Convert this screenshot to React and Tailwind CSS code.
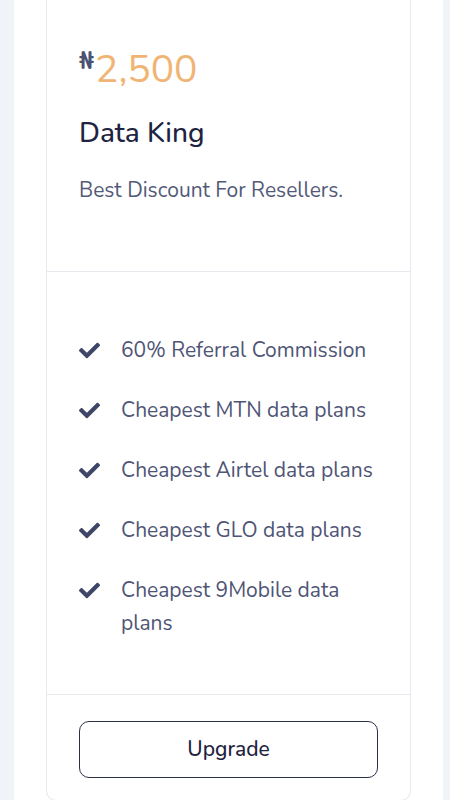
import React from "react";
import { FaCheck } from "react-icons/fa";

const features = [
  "60% Referral Commission",
  "Cheapest MTN data plans",
  "Cheapest Airtel data plans",
  "Cheapest GLO data plans",
  "Cheapest 9Mobile data plans",
];

export default function App() {
  return (
    <div
      className="min-h-screen bg-[#f0f4f8] pl-[14px] pr-[7px]"
      style={{ fontFamily: '"Nunito", "Lato", "Open Sans", sans-serif' }}
    >
      <div className="bg-white px-[32px] min-h-screen">
        <div className="border border-t-0 border-[#e7e9ee] rounded-b-[10px]">
          <div className="px-[32px] pt-[48px] pb-[66px]">
            <div className="flex items-start h-[44px]">
              <span className="text-[25px] font-bold text-[#4b5170] leading-none mt-[1px] mr-[1px]">₦</span>
              <span className="text-[39px] leading-[44px] text-[#f0b574]">2,500</span>
            </div>
            <h2 className="mt-[24px] text-[28px] leading-[34px] font-medium text-[#1e2340]">
              Data King
            </h2>
            <p className="mt-[25px] text-[21px] leading-[30px] text-[#535a78]">
              Best Discount For Resellers.
            </p>
          </div>
          <div className="border-t border-[#e7e9ee] px-[32px] pt-[62px] pb-[54px]">
            <ul className="flex flex-col gap-[27px]">
              {features.map((f) => (
                <li key={f} className="flex items-start">
                  <FaCheck className="mt-[6px] w-[21px] h-[21px] shrink-0 text-[#3f4566]" />
                  <span className="ml-[21px] text-[21px] leading-[33px] text-[#4f5575]">{f}</span>
                </li>
              ))}
            </ul>
          </div>
          <div className="border-t border-[#e7e9ee] px-[32px] pt-[26px] pb-[22px]">
            <button className="w-full h-[57px] rounded-[10px] border-[1.5px] border-[#2b3045] text-[21px] font-medium text-[#1e2340]">
              Upgrade
            </button>
          </div>
        </div>
      </div>
    </div>
  );
}
